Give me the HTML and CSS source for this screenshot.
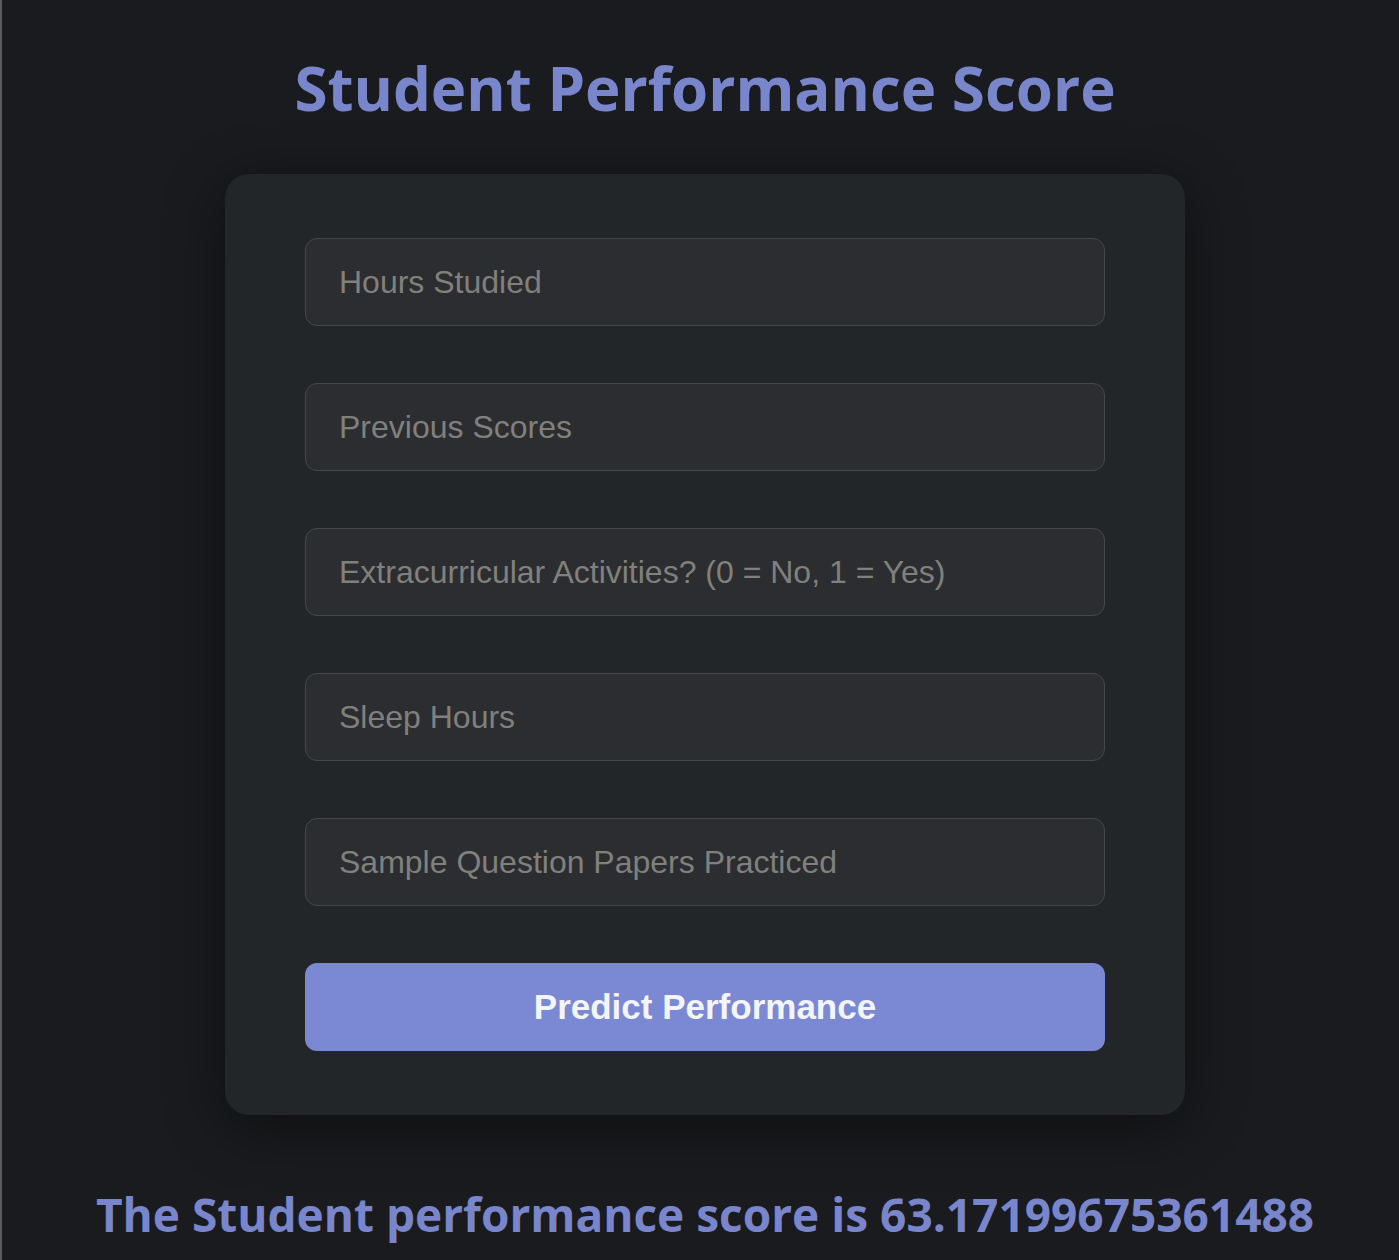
FILE: index.html
```html
<!DOCTYPE html>
<html lang="en">
<head>
<meta charset="utf-8">
<title>Student Performance Score</title>
<link rel="stylesheet" href="styles.css">
</head>
<body>
<main class="page">
  <h1 class="title">Student Performance Score</h1>
  <form class="card">
    <input class="field" type="text" placeholder="Hours Studied">
    <input class="field" type="text" placeholder="Previous Scores">
    <input class="field" type="text" placeholder="Extracurricular Activities? (0 = No, 1 = Yes)">
    <input class="field" type="text" placeholder="Sleep Hours">
    <input class="field" type="text" placeholder="Sample Question Papers Practiced">
    <button class="submit" type="button">Predict Performance</button>
  </form>
  <h2 class="result">The Student performance score is 63.17199675361488</h2>
</main>
</body>
</html>
```
FILE: styles.css
```css
html {
  background: #1a1b1e;
  border-left: 2px solid #5c5c5c;
  height: 100%;
  box-sizing: border-box;
}
body {
  margin: 0;
  background: #1a1b1e;
  font-family: "Open Sans", "Noto Sans", sans-serif;
}
.page {
  display: flex;
  flex-direction: column;
  align-items: center;
  padding-top: 46px;
  padding-left: 9px;
}
.title {
  margin: 0;
  font-size: 60px;
  line-height: 84px;
  font-weight: 700;
  color: #7986cb;
}
.card {
  margin-top: 44px;
  width: 960px;
  box-sizing: border-box;
  padding: 64px 80px;
  background: #232629;
  border-radius: 24px;
  box-shadow: 0 12px 60px rgba(0, 0, 0, 0.45);
  display: flex;
  flex-direction: column;
  gap: 57px;
}
.field {
  height: 88px;
  box-sizing: border-box;
  padding: 0 33px;
  background: #2c2d31;
  border: 1px solid #46474b;
  border-radius: 12px;
  font-family: "Liberation Sans", Arial, sans-serif;
  font-size: 32px;
  color: #d0d0d0;
  outline: none;
}
.field::placeholder {
  color: #80807c;
}
.submit {
  height: 88px;
  border: none;
  border-radius: 12px;
  background: #7b89d4;
  color: #f4f5fb;
  font-family: "Liberation Sans", Arial, sans-serif;
  font-weight: 700;
  font-size: 35px;
  cursor: pointer;
}
.result {
  margin: 68px 0 0;
  font-size: 46px;
  line-height: 62px;
  font-weight: 700;
  color: #7986cb;
}
```
